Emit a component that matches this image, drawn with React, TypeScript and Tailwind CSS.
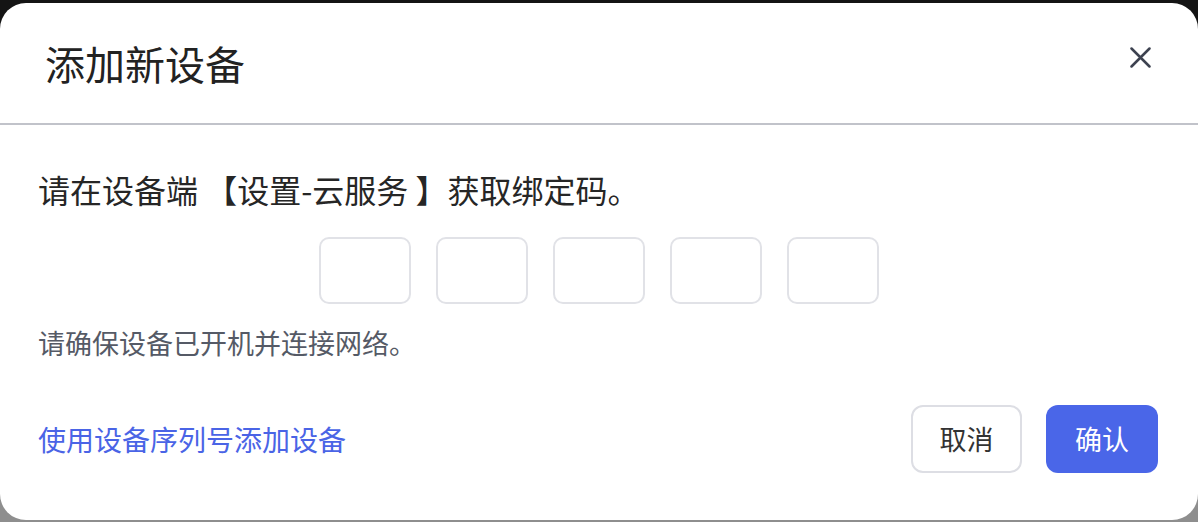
import React from "react";

const CodeBox: React.FC = () => (
  <div className="w-[92px] h-[67px] rounded-[10px] border-2 border-[#e1e2e7] bg-white" />
);

export default function App() {
  const codes = [0, 1, 2, 3, 4];

  return (
    <div
      className="w-[1198px] h-[522px] pt-[3px] pb-[2px] bg-[linear-gradient(#141414_50%,#8e8e8e_50%)]"
      style={{ fontFamily: '"Noto Sans CJK SC", "Noto Sans", sans-serif' }}
    >
      <div className="h-[517px] bg-white rounded-[26px] flex flex-col">
        {/* Header */}
        <div className="h-[122px] shrink-0 flex justify-between border-b-2 border-[#c1c3ca]">
          <h1 className="pl-[45px] self-center text-[40px] leading-[48px] text-[#222222] font-normal">
            添加新设备
          </h1>
          <button className="mr-[47px] mt-[44px] self-start text-[#3d4250]">
            <svg width="21" height="21" viewBox="0 0 21 21" fill="none">
              <path
                d="M1.5 1.5 L19.5 19.5 M19.5 1.5 L1.5 19.5"
                stroke="currentColor"
                strokeWidth="2.5"
                strokeLinecap="round"
              />
            </svg>
          </button>
        </div>

        {/* Body */}
        <div className="flex-1 flex flex-col px-[38px] pt-[44px] pb-[47px]">
          <p className="text-[32px] leading-[40px] text-[#262626]">
            请在设备端 【设置-云服务 】获取绑定码。
          </p>
          <div className="mt-[28px] flex justify-center gap-[25px]">
            {codes.map((i) => (
              <CodeBox key={i} />
            ))}
          </div>
          <p className="mt-[21px] text-[27px] leading-[36px] text-[#555a66]">
            请确保设备已开机并连接网络。
          </p>

          {/* Footer */}
          <div className="mt-auto flex items-center justify-between">
            <a className="text-[28px] leading-[36px] text-[#4a64e6] cursor-pointer">
              使用设备序列号添加设备
            </a>
            <div className="flex gap-[24px] mr-[2px]">
              <button className="w-[111px] h-[68px] rounded-[12px] border-2 border-[#dddee4] bg-white text-[27px] text-[#333333]">
                取消
              </button>
              <button className="w-[112px] h-[68px] rounded-[12px] bg-[#4a66e8] text-[27px] text-white">
                确认
              </button>
            </div>
          </div>
        </div>
      </div>
    </div>
  );
}
